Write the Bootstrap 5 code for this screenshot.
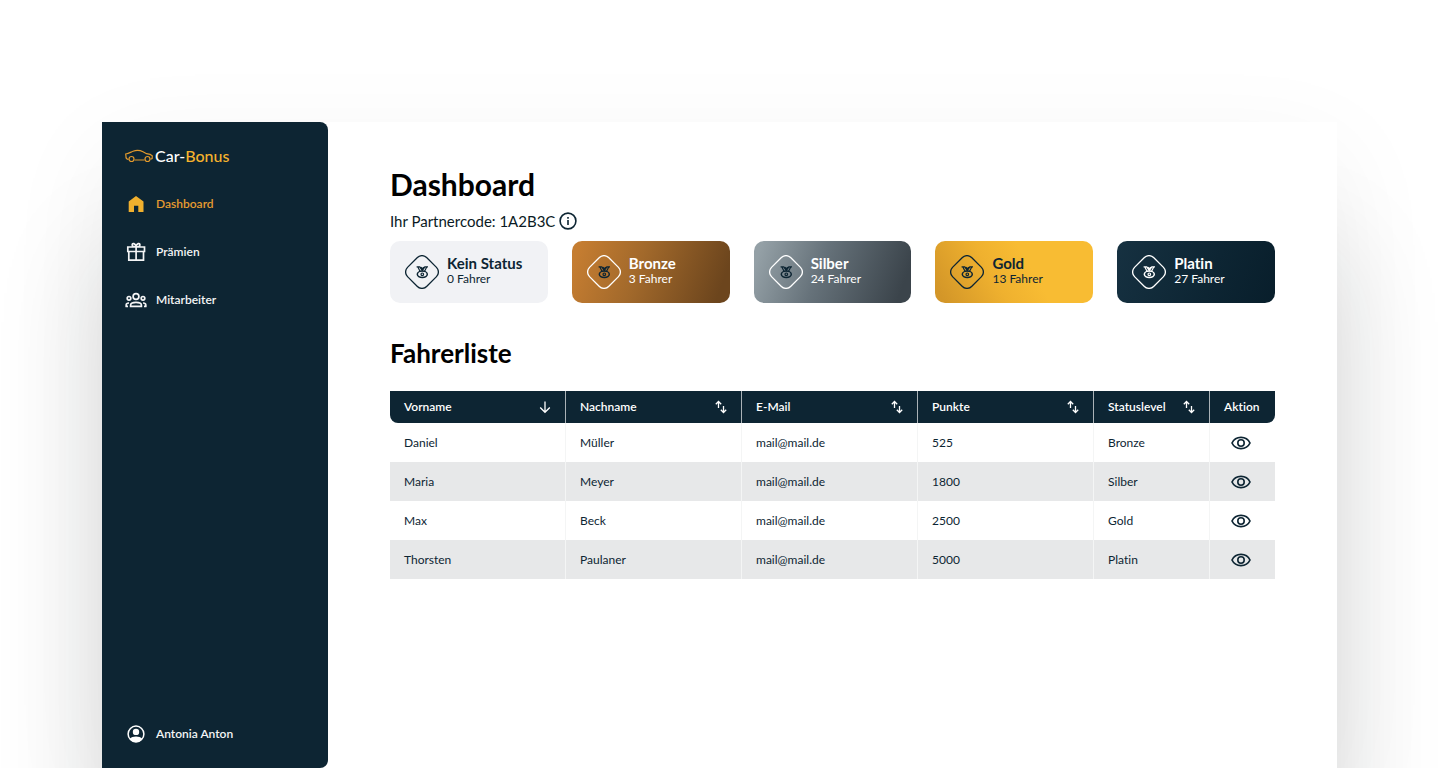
<!DOCTYPE html>
<html lang="de">
<head>
<meta charset="utf-8">
<meta name="viewport" content="width=device-width, initial-scale=1">
<title>Car-Bonus – Dashboard</title>
<link href="https://cdn.jsdelivr.net/npm/bootstrap@5.3.0/dist/css/bootstrap.min.css" rel="stylesheet">
<style>
  :root { --navy: #0d2533; }
  body { font-family: Lato, "Open Sans", sans-serif; font-variant-ligatures: none; color: var(--navy); background: #fff; font-size: 12px; }
  svg { display: block; flex: none; }
  .stage { min-height: 100vh; padding: 122px 7.15vw 0 102px; overflow: hidden; }
  .app-window { background: #fff; box-shadow: 0 130px 100px rgba(20, 24, 30, .15), 0 30px 100px rgba(20, 24, 30, .06); }
  .sidebar { width: 226px; flex: none; background: var(--navy); border-radius: 0 8px 8px 0; padding: 10px 22px; }
  .side-row { height: 48px; padding: 0; gap: 8px; font-weight: 600; color: #f4f5f6; font-size: 12px; }
  .side-row:hover { color: #fff; }
  .side-row.active { color: #e69b30; }
  .logo { font-size: 16px; gap: 2px; padding-left: 1px; font-weight: 500; color: #fff; text-decoration: none; }
  .logo b { color: #f6b32d; font-weight: 500; }
  .content { padding: 42px 62px 40px; min-width: 0; }
  h1 { font-size: 30px; line-height: 40px; font-weight: 700; color: #000; margin: 0 0 3px; }
  h2 { font-size: 26px; line-height: 32px; font-weight: 700; color: #000; margin: 34px 0 22px; }
  .partner { height: 28px; font-size: 15px; gap: 4px; margin-bottom: 6px; color: #0a1a24; }
  .info-btn { border: 0; padding: 0; background: none; color: var(--navy); }
  .tier { height: 62px; border-radius: 10px; padding: 0 15px; gap: 8px; --line: #fff; --medal: var(--navy); color: #fff; }
  .tier-text { padding-bottom: 4px; }
  .tier h3 { font-size: 15px; line-height: 18px; font-weight: 700; margin: 0; }
  .tier p { font-size: 12px; line-height: 14px; margin: 0; }
  .tier-none { background: #f1f2f5; color: var(--navy); --line: var(--navy); }
  .tier-bronze { background: linear-gradient(110deg, #c57d31 5%, #a2692b 42%, #6c451d 92%); }
  .tier-silver { background: linear-gradient(110deg, #94a0a6 5%, #66727a 42%, #3b444b 92%); }
  .tier-gold { background: linear-gradient(60deg, #d39628 5%, #efb12f 38%, #f8bc33 60%); color: var(--navy); --line: var(--navy); }
  .tier-platin { background: linear-gradient(110deg, #163141, #0d2533 60%, #081e2b); --medal: #fff; }
  .drivers { table-layout: fixed; width: 100%; border-collapse: separate; border-spacing: 0; font-size: 12px; }
  .drivers th { height: 32px; background: var(--navy); color: #fff; font-weight: 600; padding: 0 13px 0 14px; border-right: 1px solid #aab2b7; }
  .drivers th:first-child { border-bottom-left-radius: 8px; }
  .drivers th:last-child { border-bottom-right-radius: 8px; border-right: 0; }
  .drivers td { height: 39px; padding: 0 14px; border-right: 1px solid #f4f5f5; }
  .drivers td:last-child { border-right: 0; padding: 0 4px 0 0; }
  .drivers tbody tr:nth-child(even) td { background: #e7e8e9; }
  .drivers button { border: 0; padding: 0; background: none; color: inherit; }
  .col-status { width: 116px; }
  .col-action { width: 65px; }
</style>
</head>
<body>
<svg width="0" height="0" class="position-absolute" aria-hidden="true">
  <symbol id="medal" viewBox="0 0 34 34">
    <rect x="3.5" y="3.5" width="27" height="27" rx="6.5" transform="rotate(45 17 17)" fill="none" stroke="var(--line)" stroke-width="1.3"/>
    <g fill="none" stroke="var(--medal)" stroke-width="1.2">
      <path d="M11.6 11.9h3.2l2.5 3.8 2.5-3.8H23M13 12.2l2 4M21.600 12.2l-2 4M16 12.2l1.300 2 1.300-2"/>
      <ellipse cx="17.300" cy="19.300" rx="5" ry="3.200" stroke-width="1.500"/>
      <circle cx="17.300" cy="19.300" r="1.300"/>
    </g>
  </symbol>
  <symbol id="sort" viewBox="0 0 14 14">
    <path d="M4.5 8V1.6M1.8 4.2l2.7-2.7 2.7 2.7M9.5 6v6.4M6.8 9.8l2.7 2.7 2.7-2.7" fill="none" stroke="currentColor" stroke-width="1.3"/>
  </symbol>
  <symbol id="eye" viewBox="0 0 20 16">
    <path d="M1 8c1.7-3.6 5-5.6 9-5.6S17.3 4.4 19 8c-1.7 3.6-5 5.6-9 5.6S2.7 11.600 1 8Z" fill="none" stroke="currentColor" stroke-width="1.7"/>
    <circle cx="10" cy="8" r="3.2" fill="none" stroke="currentColor" stroke-width="1.6"/>
  </symbol>
</svg>

<div class="stage d-flex">
  <div class="app-window d-flex flex-grow-1">
    <nav class="sidebar d-flex flex-column" aria-label="Hauptnavigation">
      <a href="#" class="logo side-row d-flex align-items-center">
        <svg width="28" height="14" viewBox="0 0 28 14" fill="none" stroke="#e39a2c" stroke-width="1.2">
          <path d="M3.5 10.5C1.3 10.2.8 9 1 7.5L.7 5C3.500 4.7 5.500 3.300 8 2.200c3-1 7-.9 10 .5l3.500 2c3 .3 4.800 1 5.800 2.200l-.2 2.600-1.600.8M9.500 11h10"/>
          <circle cx="6.500" cy="10" r="2.500"/><circle cx="22.500" cy="10" r="2.500"/>
        </svg>
        <span>Car-<b>Bonus</b></span>
      </a>
      <a href="#" class="nav-link side-row active d-flex align-items-center" aria-current="page">
        <svg width="24" height="24" viewBox="0 0 24 24" fill="#f0b02e"><path d="M4.700 20V9.500L12 4l7.500 5.500V20h-5.200v-6.300H10V20Z"/></svg>
        Dashboard
      </a>
      <a href="#" class="nav-link side-row d-flex align-items-center">
        <svg width="24" height="24" viewBox="0 0 24 24" fill="none" stroke="currentColor" stroke-width="1.7"><path d="M4.800 11.500v8.700h14.700v-8.700M3.800 7h16.700v4.500H3.800ZM12.100 6v14M12 6.800C10 7 8.200 6.500 8.200 4.900c0-2.200 3.200-1.800 3.800 1.900.7-3.700 3.900-4.100 3.900-1.900 0 1.600-1.900 2.100-3.900 1.900Z"/></svg>
        Prämien
      </a>
      <a href="#" class="nav-link side-row d-flex align-items-center">
        <svg width="24" height="24" viewBox="0 0 24 24" fill="none" stroke="currentColor" stroke-width="1.7"><circle cx="12" cy="8.500" r="2.900"/><circle cx="5" cy="10.300" r="1.800"/><circle cx="19" cy="10.300" r="1.800"/><path d="M6.600 18.300v-1.200c0-3.700 10.800-3.700 10.800 0v1.200ZM2.200 19v-2c0-1.300 1-2 2.800-2M21.800 19v-2c0-1.300-1-2-2.800-2M1.500 18.300H4M20 18.300h2.500"/></svg>
        Mitarbeiter
      </a>
      <a href="#" class="nav-link side-row d-flex align-items-center mt-auto">
        <svg width="24" height="24" viewBox="0 0 24 24"><circle cx="12" cy="12" r="7.900" fill="none" stroke="#fff" stroke-width="1.5"/><circle cx="12" cy="9.900" r="3.200" fill="#fff"/><path d="M5.800 16.700c2.500-3 9.900-3 12.400 0-2.500 4.300-9.900 4.300-12.400 0Z" fill="#fff"/></svg>
        Antonia Anton
      </a>
    </nav>

    <main class="content flex-grow-1">
      <h1>Dashboard</h1>
      <div class="partner d-flex align-items-center">
        <span>Ihr Partnercode: 1A2B3C</span>
        <button type="button" class="info-btn" aria-label="Info">
          <svg width="18" height="18" viewBox="0 0 18 18" fill="none" stroke="currentColor" stroke-width="1.6"><circle cx="9" cy="9" r="7.900"/><path d="M9 8v5M9 5v1.700"/></svg>
        </button>
      </div>

      <div class="row row-cols-5 gx-4">
        <div class="col"><div class="tier tier-none d-flex align-items-center"><svg width="34" height="34"><use href="#medal"/></svg><div class="tier-text"><h3>Kein Status</h3><p>0 Fahrer</p></div></div></div>
        <div class="col"><div class="tier tier-bronze d-flex align-items-center"><svg width="34" height="34"><use href="#medal"/></svg><div class="tier-text"><h3>Bronze</h3><p>3 Fahrer</p></div></div></div>
        <div class="col"><div class="tier tier-silver d-flex align-items-center"><svg width="34" height="34"><use href="#medal"/></svg><div class="tier-text"><h3>Silber</h3><p>24 Fahrer</p></div></div></div>
        <div class="col"><div class="tier tier-gold d-flex align-items-center"><svg width="34" height="34"><use href="#medal"/></svg><div class="tier-text"><h3>Gold</h3><p>13 Fahrer</p></div></div></div>
        <div class="col"><div class="tier tier-platin d-flex align-items-center"><svg width="34" height="34"><use href="#medal"/></svg><div class="tier-text"><h3>Platin</h3><p>27 Fahrer</p></div></div></div>
      </div>

      <h2>Fahrerliste</h2>
      <table class="drivers">
        <colgroup><col><col><col><col><col class="col-status"><col class="col-action"></colgroup>
        <thead>
          <tr>
            <th scope="col"><div class="d-flex align-items-center justify-content-between">Vorname <button type="button" aria-label="Absteigend sortiert"><svg width="14" height="14" viewBox="0 0 14 14" fill="none" stroke="currentColor" stroke-width="1.3"><path d="M7 1.500v10.700M2.200 7.500 7 12.300l4.800-4.800"/></svg></button></div></th>
            <th scope="col"><div class="d-flex align-items-center justify-content-between">Nachname <button type="button" aria-label="Sortieren"><svg width="14" height="14"><use href="#sort"/></svg></button></div></th>
            <th scope="col"><div class="d-flex align-items-center justify-content-between">E-Mail <button type="button" aria-label="Sortieren"><svg width="14" height="14"><use href="#sort"/></svg></button></div></th>
            <th scope="col"><div class="d-flex align-items-center justify-content-between">Punkte <button type="button" aria-label="Sortieren"><svg width="14" height="14"><use href="#sort"/></svg></button></div></th>
            <th scope="col"><div class="d-flex align-items-center justify-content-between">Statuslevel <button type="button" aria-label="Sortieren"><svg width="14" height="14"><use href="#sort"/></svg></button></div></th>
            <th scope="col">Aktion</th>
          </tr>
        </thead>
        <tbody>
          <tr><td>Daniel</td><td>Müller</td><td>mail@mail.de</td><td>525</td><td>Bronze</td><td><button type="button" class="d-block mx-auto" aria-label="Ansehen"><svg width="20" height="16"><use href="#eye"/></svg></button></td></tr>
          <tr><td>Maria</td><td>Meyer</td><td>mail@mail.de</td><td>1800</td><td>Silber</td><td><button type="button" class="d-block mx-auto" aria-label="Ansehen"><svg width="20" height="16"><use href="#eye"/></svg></button></td></tr>
          <tr><td>Max</td><td>Beck</td><td>mail@mail.de</td><td>2500</td><td>Gold</td><td><button type="button" class="d-block mx-auto" aria-label="Ansehen"><svg width="20" height="16"><use href="#eye"/></svg></button></td></tr>
          <tr><td>Thorsten</td><td>Paulaner</td><td>mail@mail.de</td><td>5000</td><td>Platin</td><td><button type="button" class="d-block mx-auto" aria-label="Ansehen"><svg width="20" height="16"><use href="#eye"/></svg></button></td></tr>
        </tbody>
      </table>
    </main>
  </div>
</div>
<script src="https://cdn.jsdelivr.net/npm/bootstrap@5.3.0/dist/js/bootstrap.bundle.min.js"></script>
</body>
</html>
